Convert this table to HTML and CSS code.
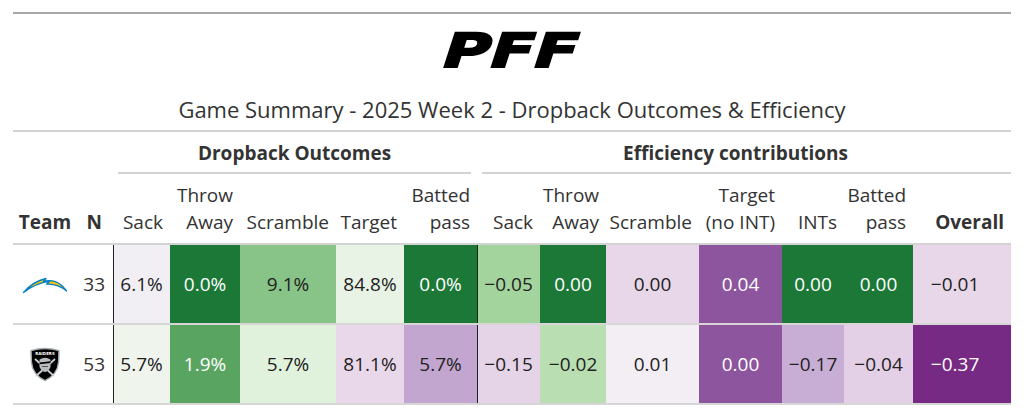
FILE: index.html
```html
<!DOCTYPE html>
<html lang="en">
<head>
<meta charset="utf-8">
<title>Game Summary - Dropback Outcomes &amp; Efficiency</title>
<link rel="stylesheet" href="styles.css">
</head>
<body>
<div class="wrap">
  <div class="head">
    <svg class="pff" width="148" height="36" viewBox="0 0 148 36" aria-label="PFF">
      <text x="12" y="34.5" textLength="135" lengthAdjust="spacingAndGlyphs" transform="skewX(-18)" class="pff-text">PFF</text>
    </svg>
    <div class="title">Game Summary - 2025 Week 2 - Dropback Outcomes &amp; Efficiency</div>
  </div>
  <table class="tbl">
    <colgroup>
      <col class="c-team"><col class="c-n">
      <col class="c-sack"><col class="c-throw"><col class="c-scr"><col class="c-tgt"><col class="c-bat">
      <col class="c-esack"><col class="c-ethrow"><col class="c-escr"><col class="c-etgt"><col class="c-eint"><col class="c-ebat"><col class="c-ovr">
    </colgroup>
    <thead>
      <tr class="spans">
        <th></th><th></th>
        <th colspan="5" class="sp"><div class="spl spl-left">Dropback Outcomes</div></th>
        <th colspan="7" class="sp"><div class="spl spl-right">Efficiency contributions</div></th>
      </tr>
      <tr class="labels">
        <th class="h-team">Team</th>
        <th class="h-n">N</th>
        <th>Sack</th>
        <th>Throw<br>Away</th>
        <th>Scramble</th>
        <th>Target</th>
        <th>Batted<br>pass</th>
        <th>Sack</th>
        <th>Throw<br>Away</th>
        <th>Scramble</th>
        <th>Target<br>(no INT)</th>
        <th>INTs</th>
        <th>Batted<br>pass</th>
        <th class="h-bold">Overall</th>
      </tr>
    </thead>
    <tbody>
      <tr>
        <td class="team">
          <svg class="bolt" width="46" height="20" viewBox="0 0 46 20" aria-label="Chargers">
            <path d="M1.5 18.5 C8 11 15 6.5 24 4.5 L21.5 7.2 C30 5.5 37 7 44.5 17 C38 11.5 31 9.8 24.5 10.2 L27.5 7.4 C18 8.6 10 12 1.5 18.5 Z" fill="#ffc20e" stroke="#0080c6" stroke-width="1.3" stroke-linejoin="round"/>
          </svg>
        </td>
        <td class="n">33</td>
        <td class="vl" style="background:#f2eff4">6.1%</td>
        <td class="w" style="background:#1b7837">0.0%</td>
        <td style="background:#88c387">9.1%</td>
        <td style="background:#e8f3e5">84.8%</td>
        <td class="w" style="background:#1b7837">0.0%</td>
        <td class="vl" style="background:#a4d49e">−0.05</td>
        <td class="w" style="background:#1b7837">0.00</td>
        <td style="background:#e8d6e9">0.00</td>
        <td class="w" style="background:#8c559e">0.04</td>
        <td class="w" style="background:#1b7837">0.00</td>
        <td class="w" style="background:#1b7837">0.00</td>
        <td class="ovr" style="background:#e8d6e9">−0.01</td>
      </tr>
      <tr>
        <td class="team">
          <svg class="shield" width="32" height="35" viewBox="0 0 32 35" aria-label="Raiders">
            <path d="M2 3.6 Q16 -0.6 30 3.6 L29.6 15 Q28.6 27.5 16 33.6 Q3.4 27.5 2.4 15 Z" fill="#000" stroke="#a5acaf" stroke-width="1.4"/>
            <path d="M4.5 5 Q16 2 27.5 5 L27.3 8.6 Q16 6.2 4.7 8.6 Z" fill="#000"/>
            <text x="16" y="8" class="raiders-word">RAIDERS</text>
            <line x1="6" y1="12" x2="25" y2="29" stroke="#c8cdd0" stroke-width="1.8"/>
            <line x1="26" y1="12" x2="7" y2="29" stroke="#c8cdd0" stroke-width="1.8"/>
            <path d="M10.5 12.5 Q16 9 21.5 12.5 L21.5 20 Q19.5 24.5 16 25 Q12.5 24.5 10.5 20 Z" fill="#b7bcbf"/>
            <path d="M10.5 15.5 L21.5 14.3 L21.5 16 L10.5 17.2 Z" fill="#000"/>
            <path d="M13 19.5 L19 19.5" stroke="#555" stroke-width="1"/>
          </svg>
        </td>
        <td class="n">53</td>
        <td class="vl" style="background:#eff5ed">5.7%</td>
        <td class="w" style="background:#5aa461">1.9%</td>
        <td style="background:#e0f1dc">5.7%</td>
        <td style="background:#e9d8ea">81.1%</td>
        <td style="background:#c3a6cf">5.7%</td>
        <td class="vl" style="background:#e5d3e7">−0.15</td>
        <td style="background:#b8deb2">−0.02</td>
        <td style="background:#f3eef4">0.01</td>
        <td class="w" style="background:#8c559e">0.00</td>
        <td style="background:#c8aed4">−0.17</td>
        <td style="background:#e3cfe6">−0.04</td>
        <td class="w ovr" style="background:#762a83">−0.37</td>
      </tr>
    </tbody>
  </table>
</div>
</body>
</html>
```
FILE: styles.css
```css
html, body {
  margin: 0;
  padding: 0;
  background: #ffffff;
}
body {
  font-family: "Open Sans", "Noto Sans", "DejaVu Sans", sans-serif;
  color: #333333;
}
.wrap {
  width: 998px;
  margin: 12px 0 0 13px;
}
.head {
  border-top: 2px solid #a8a8a8;
  border-bottom: 2px solid #d3d3d3;
  padding: 18px 0 8px;
  text-align: center;
}
.pff {
  display: block;
  margin: 0 auto;
  overflow: visible;
}
.pff-text {
  font-family: "DejaVu Sans", "Liberation Sans", sans-serif;
  font-weight: 700;
  font-size: 47px;
  fill: #000000;
  stroke: #000000;
  stroke-width: 1.8px;
  stroke-linejoin: miter;
}
.title {
  margin-top: 28px;
  font-size: 22px;
  line-height: 26px;
  color: #333333;
}
.tbl {
  width: 998px;
  table-layout: fixed;
  border-collapse: separate;
  border-spacing: 0;
  font-size: 19px;
}
.c-team { width: 64px; }
.c-n { width: 36px; }
.c-sack { width: 57px; }
.c-throw { width: 70px; }
.c-scr { width: 96px; }
.c-tgt { width: 68px; }
.c-bat { width: 73px; }
.c-esack { width: 63px; }
.c-ethrow { width: 66px; }
.c-escr { width: 93px; }
.c-etgt { width: 83px; }
.c-eint { width: 62px; }
.c-ebat { width: 69px; }
.c-ovr { width: 98px; }

.spans th {
  padding: 8px 0 0;
  font-weight: 700;
  vertical-align: bottom;
}
.spl {
  line-height: 27px;
  padding-bottom: 5px;
  border-bottom: 2px solid #d3d3d3;
  text-align: center;
}
.spl-left { margin: 0 6px 0 5px; }
.spl-right { margin: 0 0 0 5px; padding-right: 22px; }

.labels th {
  font-weight: 400;
  text-align: right;
  vertical-align: bottom;
  line-height: 27px;
  padding: 8px 7px 7px 0;
  border-bottom: 2px solid #d3d3d3;
  white-space: nowrap;
}
.labels th.h-team {
  text-align: center;
  font-weight: 700;
  padding-right: 0;
}
.labels th.h-n {
  font-weight: 700;
  padding-right: 11px;
}
.labels th.h-bold {
  font-weight: 700;
}

.tbl td {
  height: 78px;
  padding: 0;
  text-align: center;
  vertical-align: middle;
  border-bottom: 2px solid #d6d6d6;
  color: #222222;
  white-space: nowrap;
}
.tbl td.w {
  color: #ffffff;
}
.tbl td.vl {
  box-shadow: inset 1px 0 0 #222222;
}
.tbl td.n {
  text-align: right;
  padding-right: 8px;
  color: #333333;
}
.tbl td.ovr {
  padding-right: 14px;
}
.tbl td.team svg {
  display: block;
  margin: 0 auto;
}
.raiders-word {
  font-family: "DejaVu Sans", sans-serif;
  font-size: 4px;
  font-weight: 700;
  fill: #ffffff;
  text-anchor: middle;
}
```
